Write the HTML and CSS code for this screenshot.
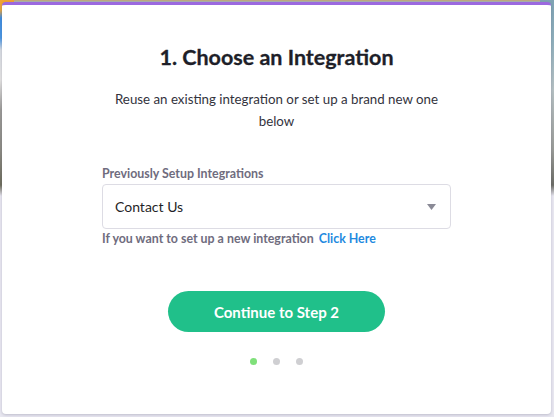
FILE: index.html
```html
<!DOCTYPE html>
<html>
<head>
<meta charset="utf-8">
<link rel="stylesheet" href="styles.css">
</head>
<body>
<div class="backdrop">
  <div class="modal">
    <h1 class="title">1. Choose an Integration</h1>
    <p class="subtitle">Reuse an existing integration or set up a brand new one below</p>
    <div class="form">
      <label class="label">Previously Setup Integrations</label>
      <div class="select">
        <span class="select-value">Contact Us</span>
        <svg class="caret" width="9" height="6" viewBox="0 0 9 6"><path d="M0 0 H9 L4.5 6 Z" fill="#8a8a96"/></svg>
      </div>
      <div class="helper">If you want to set up a new integration <a class="link">Click Here</a></div>
    </div>
    <button class="continue">Continue to Step 2</button>
    <div class="dots">
      <span class="dot active"></span>
      <span class="dot"></span>
      <span class="dot"></span>
    </div>
  </div>
</div>
</body>
</html>
```
FILE: styles.css
```css
html, body {
  margin: 0;
  padding: 0;
}
body {
  width: 554px;
  height: 417px;
  overflow: hidden;
  font-family: Lato, "Noto Sans", sans-serif;
  background:
    linear-gradient(to bottom, #f2a232 0px, #e9a640 10px, #3f8fe0 18px, #4b98e4 38px, #d8dde2 50px, #e4e4e2 80px, #9c9c98 110px, #8c8c84 150px, #6e6e5c 185px, #e9e8f1 196px) left top / 14px 417px no-repeat,
    linear-gradient(to bottom, #7fa3b4 0px, #8fb0bc 40px, #b6c1c3 90px, #9a9c98 150px, #6c6d66 185px, #e9e8f1 196px) right top / 14px 417px no-repeat,
    linear-gradient(to bottom, #c8a46a 0px, #a0b8c4 2px) center top / 100% 3px no-repeat,
    #e9e8f1;
}
.backdrop {
  padding: 2px 3px 3px 2px;
  display: flex;
}
.modal {
  flex: 1;
  height: 412px;
  box-sizing: border-box;
  background: #fff;
  border-top: 3px solid #9b69df;
  border-radius: 4px;
  box-shadow: 0 1px 3px rgba(60, 55, 90, 0.25);
  display: flex;
  flex-direction: column;
  align-items: center;
  padding-top: 38px;
}
.title {
  margin: 0;
  font-size: 21.5px;
  line-height: 28px;
  font-weight: 700;
  color: #1e1f29;
  -webkit-text-stroke: 0.3px #1e1f29;
}
.subtitle {
  margin: 17px 0 0;
  width: 330px;
  text-align: center;
  font-size: 13.3px;
  line-height: 22px;
  color: #33333d;
}
.form {
  margin-top: 34px;
  width: 349px;
  display: flex;
  flex-direction: column;
}
.label {
  font-size: 12.4px;
  line-height: 16px;
  font-weight: 700;
  color: #6f6c7e;
}
.select {
  margin-top: 2px;
  height: 43px;
  border: 1px solid #dddce4;
  border-radius: 4px;
  display: flex;
  align-items: center;
  justify-content: space-between;
  padding: 0 14px 0 12px;
}
.select-value {
  font-size: 14px;
  color: #1f1f27;
}
.caret {
  display: block;
}
.helper {
  margin-top: 2px;
  font-size: 12.4px;
  line-height: 16px;
  font-weight: 700;
  color: #6f6c7e;
}
.link {
  color: #1f8ae0;
  margin-left: 2px;
}
.continue {
  margin-top: 44px;
  width: 217px;
  height: 41px;
  border: none;
  border-radius: 21px;
  background: #20c08a;
  color: #fff;
  font-family: Lato, "Noto Sans", sans-serif;
  font-size: 15px;
  font-weight: 700;
  padding: 0;
}
.dots {
  margin-top: 26px;
  display: flex;
  gap: 16px;
}
.dot {
  width: 7px;
  height: 7px;
  border-radius: 50%;
  background: #cfcfd2;
}
.dot.active {
  background: #7fe07a;
}
```
